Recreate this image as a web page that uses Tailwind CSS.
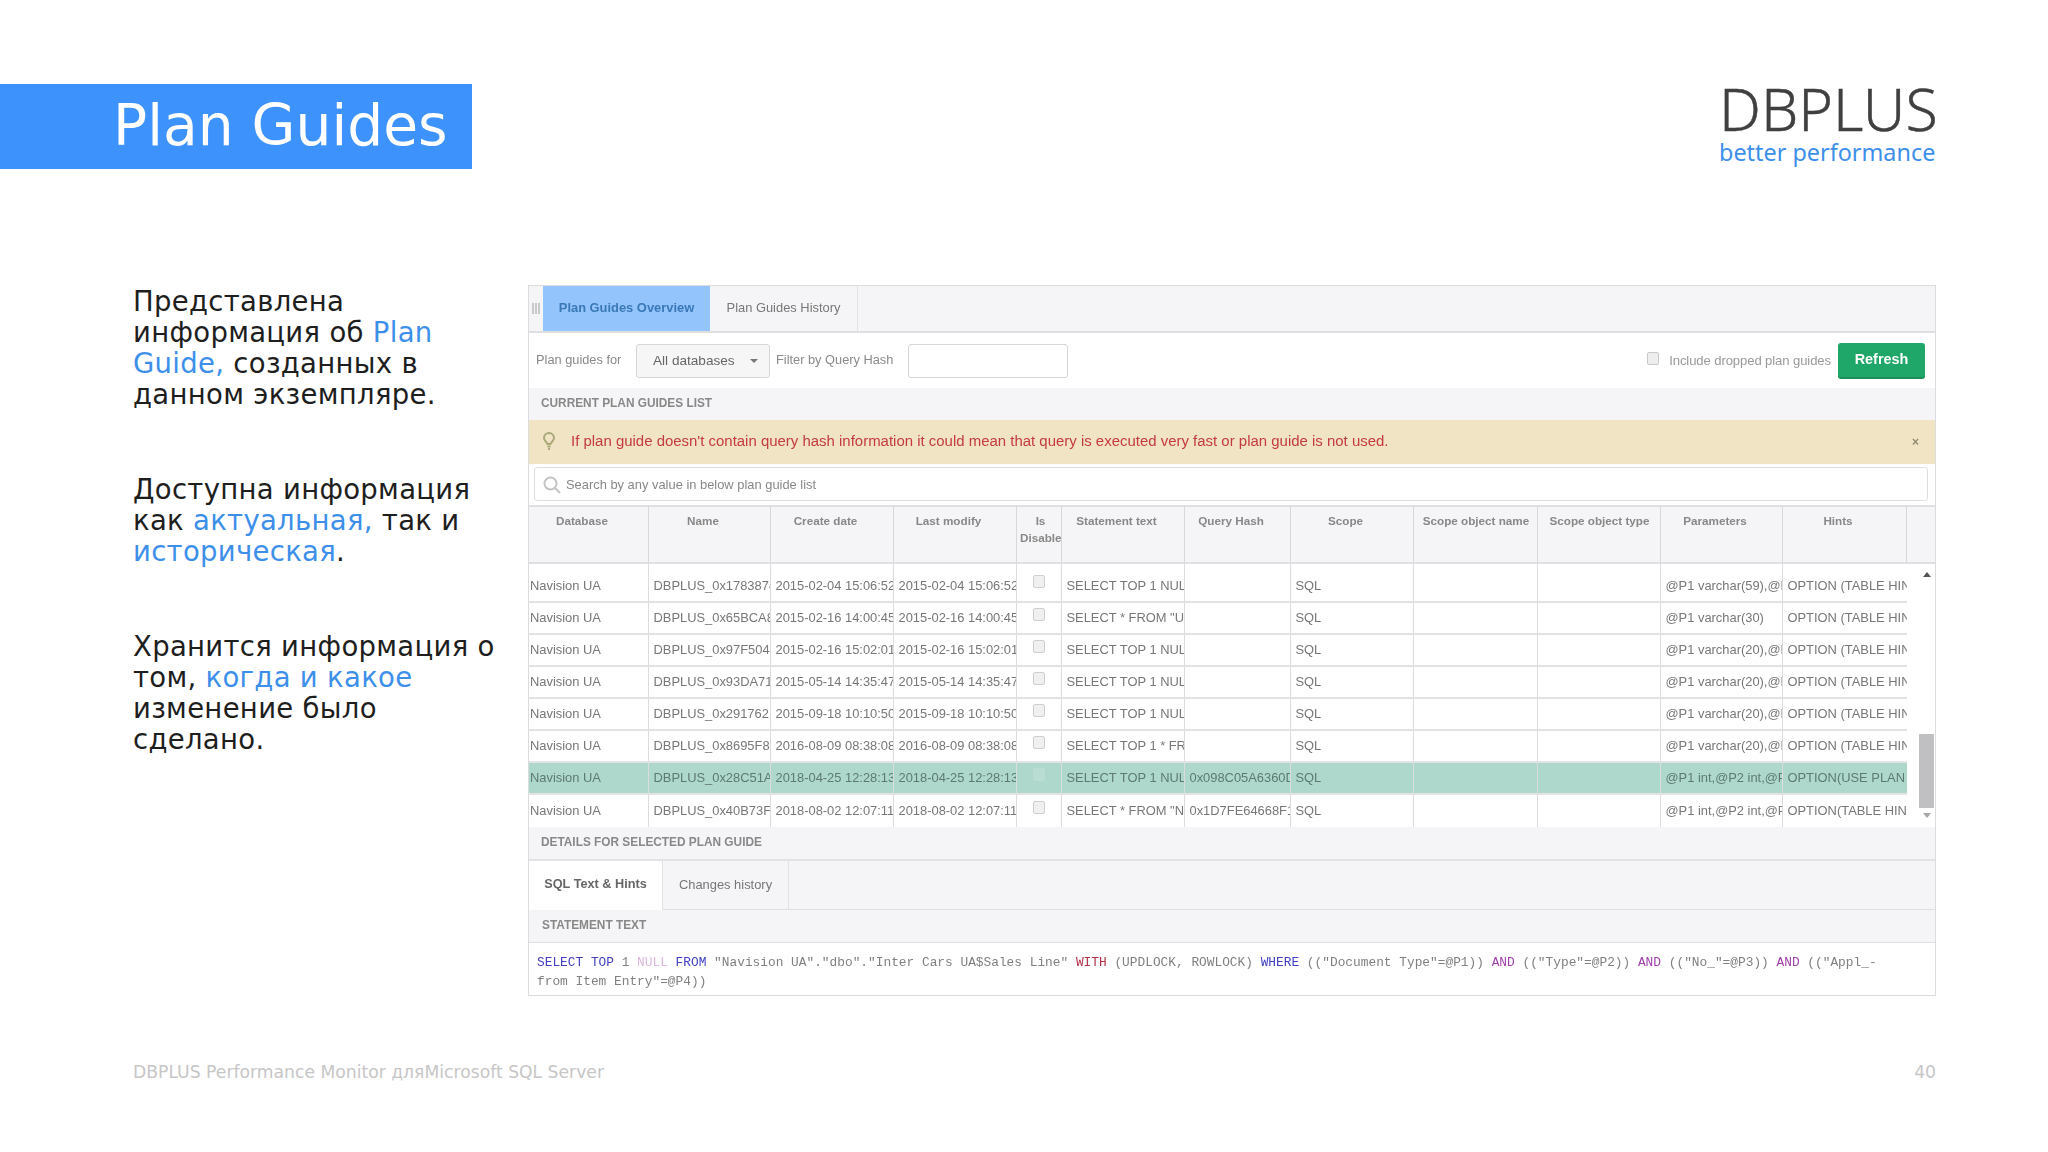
<!doctype html>
<html lang="ru">
<head>
<meta charset="utf-8">
<script src="https://cdn.jsdelivr.net/npm/@tailwindcss/browser@4"></script>
<title>Plan Guides</title>
</head>
<body class="bg-white">
<div class="w-[2048px] h-[1152px] overflow-hidden flex flex-col [font-family:'DejaVu_Sans',sans-serif]">
  <header class="mt-[84px] h-[85px] flex justify-between shrink-0">
    <div class="w-[472px] h-[85px] bg-[#3d93fb] text-white text-[56.7px] leading-[83px] pl-[113px] whitespace-nowrap">Plan Guides</div>
    <div class="w-[219px] mr-[110px] flex flex-col items-stretch [font-family:'Noto_Sans',sans-serif]">
      <div class="text-[#404040] text-[59px] leading-[46px] mt-[1px] font-light [-webkit-text-stroke:0.4px_#404040] whitespace-nowrap">DBPLUS</div>
      <div class="text-[#3d8fea] text-[23.4px] leading-[30px] mt-[6px] whitespace-nowrap">better performance</div>
    </div>
  </header>

  <main class="mt-[116px] flex shrink-0 pl-[133px]">
    <div class="w-[395px] pt-[1px] text-[#1e1e1e] text-[27.5px] leading-[31px] tracking-[0.3px]">
      <p>Представлена информация об <span class="text-[#3d8fea]">Plan Guide,</span> созданных в данном экземпляре.</p>
      <p class="mt-[64px] w-[370px]">Доступна информация как <span class="text-[#3d8fea]">актуальная,</span> так и <span class="text-[#3d8fea]">историческая</span>.</p>
      <p class="mt-[64px] w-[372px]">Хранится информация о том, <span class="text-[#3d8fea]">когда и какое</span> изменение было сделано.</p>
    </div>

    <section class="w-[1408px] h-[711px] border border-[#dcdcdf] flex flex-col text-[#777] [font-family:'Liberation_Sans',sans-serif] text-[12.9px] blur-[0.3px]">
      <div class="h-[47px] shrink-0 flex bg-[#f5f5f7] border-b-2 border-[#dfdfe2]">
        <div class="w-[14px] flex items-center justify-center gap-[1px]">
          <i class="w-[2px] h-[11px] bg-[#c9c9cc]"></i><i class="w-[2px] h-[11px] bg-[#c9c9cc]"></i><i class="w-[2px] h-[11px] bg-[#c9c9cc]"></i>
        </div>
        <div class="w-[167px] bg-[#93c4fb] text-[#3a78b8] font-bold text-[12.9px] pb-[2px] flex items-center justify-center">Plan Guides Overview</div>
        <div class="w-[148px] border-r border-[#e2e2e5] text-[12.9px] pb-[2px] flex items-center justify-center">Plan Guides History</div>
      </div>
      <div class="h-[55px] shrink-0 flex items-center pl-[7px] pr-[10px] text-[12.8px] text-[#8a8a8a]">
        <span class="w-[100px] -mt-[1px]">Plan guides for</span>
        <div class="w-[134px] h-[34px] border border-[#d6d6d8] rounded-[3px] bg-[#f6f6f7] flex items-center justify-between pl-[16px] pr-[11px] pt-[1px] text-[13.6px] text-[#666]">
          <span>All databases</span><i class="w-0 h-0 border-x-[4px] border-x-transparent border-t-[4px] border-t-[#777]"></i>
        </div>
        <span class="ml-[6px] w-[132px] -mt-[1px]">Filter by Query Hash</span>
        <div class="w-[160px] h-[34px] border border-[#d6d6d8] rounded-[3px] bg-white"></div>
        <div class="ml-auto w-[12px] h-[13px] border border-[#c8c8c8] rounded-[2px] bg-[#eeeeee] -mt-[4px]"></div>
        <span class="ml-[10px] text-[13.1px] tracking-[-0.1px] text-[#999] mt-[1px]">Include dropped plan guides</span>
        <div class="ml-[7px] w-[87px] h-[36px] rounded-[3px] bg-[#1fa669] border-b-2 border-[#1b8f5a] text-white font-bold text-[14.4px] flex items-center justify-center">Refresh</div>
      </div>
      <div class="h-[32px] shrink-0 bg-[#f5f5f7] flex items-center pl-[12px] pb-[1px] font-bold text-[11.85px] text-[#888] uppercase">Current plan guides list</div>
      <div class="h-[44px] shrink-0 bg-[#f0e4c4] flex items-center justify-between pl-[12px] pr-[16px] pb-[1px] text-[14.96px] text-[#c53a40]">
        <div class="flex items-center">
          <svg class="w-[16px] h-[20px]" viewBox="0 0 16 20" fill="none" stroke="#a8a878" stroke-width="2"><path d="M8 2a5 5 0 0 0-5 5c0 2.500 2.500 4 3.500 6h3C10.500 11 13 9.500 13 7a5 5 0 0 0-5-5z"/><path d="M6.500 15.500h3M7 18h2"/></svg>
          <span class="ml-[14px]">If plan guide doesn't contain query hash information it could mean that query is executed very fast or plan guide is not used.</span>
        </div>
        <span class="text-[#8f8a70] font-bold text-[12px]">×</span>
      </div>
      <div class="h-[41px] shrink-0 pl-[5px] pr-[7px] pt-[3px]">
        <div class="h-[34px] border border-[#dedee0] rounded-[3px] flex items-center pl-[8px] pt-[1px] text-[12.9px] text-[#888]">
          <svg class="w-[18px] h-[18px]" viewBox="0 0 18 18" fill="none" stroke="#c4c4c6" stroke-width="2"><circle cx="7.500" cy="7.500" r="6"/><path d="M12 12l5 5"/></svg>
          <span class="ml-[5px]">Search by any value in below plan guide list</span>
        </div>
      </div>

      <table class="w-[1406px] table-fixed border-separate border-spacing-0 shrink-0 [&_th]:border-r [&_th]:border-[#d8d8db] [&_th]:bg-[#f5f5f7] [&_th]:h-[59px] [&_th]:align-top [&_th]:pt-[5px] [&_th]:pr-[13px] [&_th]:font-bold [&_th]:text-[11.7px] [&_th]:leading-[17px] [&_th]:text-[#888] [&_th]:border-y-2 [&_th]:border-y-[#e0e0e3] [&_th]:overflow-hidden [&_th]:whitespace-nowrap">
        <colgroup>
          <col class="w-[120px]"><col class="w-[122px]"><col class="w-[123px]"><col class="w-[123px]"><col class="w-[45px]"><col class="w-[123px]"><col class="w-[106px]"><col class="w-[123px]"><col class="w-[124px]"><col class="w-[123px]"><col class="w-[122px]"><col class="w-[124px]"><col>
        </colgroup>
        <tr>
          <th>Database</th><th>Name</th><th>Create date</th><th>Last modify</th><th class="!pr-0 !pl-[3px]">Is<br>Disabled</th><th>Statement text</th><th>Query Hash</th><th>Scope</th><th class="!pr-0 !pl-[1px]">Scope object name</th><th class="!pr-0 !pl-[1px]">Scope object type</th><th>Parameters</th><th>Hints</th><th class="!border-r-0"></th>
        </tr>
      </table>

      <div class="h-[263px] shrink-0 flex">
        <table class="w-[1378px] h-[263px] shrink-0 table-fixed border-separate border-spacing-0 [&_td]:border-r [&_td]:border-[#dcdcdf] [&_td]:border-b-2 [&_td]:border-b-[#e3e3e6] [&_td]:h-[32px] [&_td]:pl-[4.5px] [&_td]:overflow-hidden [&_td]:whitespace-nowrap [&_td:first-child]:pl-[1px] [&_td:nth-child(5)]:pr-[5px] [&_tr:last-child_td]:border-b-0 [&_td:last-child]:border-r-0">
          <colgroup>
            <col class="w-[120px]"><col class="w-[122px]"><col class="w-[123px]"><col class="w-[123px]"><col class="w-[45px]"><col class="w-[123px]"><col class="w-[106px]"><col class="w-[123px]"><col class="w-[124px]"><col class="w-[123px]"><col class="w-[122px]"><col class="w-[124px]">
          </colgroup>
          <tr class="[&_td]:h-[39px] [&_td]:pt-[7px]">
            <td>Navision UA</td><td>DBPLUS_0x1783874F</td><td>2015-02-04 15:06:52</td><td>2015-02-04 15:06:52</td><td class="!pt-0"><div class="w-[12px] h-[13px] mx-auto -mt-[3px] border border-[#cfcfcf] rounded-[2px] bg-[#f0f0f0]"></div></td><td>SELECT TOP 1 NULL FROM</td><td></td><td>SQL</td><td></td><td></td><td>@P1 varchar(59),@P2</td><td>OPTION (TABLE HINT</td>
          </tr>
          <tr>
            <td>Navision UA</td><td>DBPLUS_0x65BCA8F1</td><td>2015-02-16 14:00:45</td><td>2015-02-16 14:00:45</td><td><div class="w-[12px] h-[13px] mx-auto -mt-[7px] border border-[#cfcfcf] rounded-[2px] bg-[#f0f0f0]"></div></td><td>SELECT * FROM "UA</td><td></td><td>SQL</td><td></td><td></td><td>@P1 varchar(30)</td><td>OPTION (TABLE HINT</td>
          </tr>
          <tr>
            <td>Navision UA</td><td>DBPLUS_0x97F50401</td><td>2015-02-16 15:02:01</td><td>2015-02-16 15:02:01</td><td><div class="w-[12px] h-[13px] mx-auto -mt-[7px] border border-[#cfcfcf] rounded-[2px] bg-[#f0f0f0]"></div></td><td>SELECT TOP 1 NULL FROM</td><td></td><td>SQL</td><td></td><td></td><td>@P1 varchar(20),@P2</td><td>OPTION (TABLE HINT</td>
          </tr>
          <tr>
            <td>Navision UA</td><td>DBPLUS_0x93DA71C2</td><td>2015-05-14 14:35:47</td><td>2015-05-14 14:35:47</td><td><div class="w-[12px] h-[13px] mx-auto -mt-[7px] border border-[#cfcfcf] rounded-[2px] bg-[#f0f0f0]"></div></td><td>SELECT TOP 1 NULL FROM</td><td></td><td>SQL</td><td></td><td></td><td>@P1 varchar(20),@P2</td><td>OPTION (TABLE HINT</td>
          </tr>
          <tr>
            <td>Navision UA</td><td>DBPLUS_0x291762B3</td><td>2015-09-18 10:10:50</td><td>2015-09-18 10:10:50</td><td><div class="w-[12px] h-[13px] mx-auto -mt-[7px] border border-[#cfcfcf] rounded-[2px] bg-[#f0f0f0]"></div></td><td>SELECT TOP 1 NULL FROM</td><td></td><td>SQL</td><td></td><td></td><td>@P1 varchar(20),@P2</td><td>OPTION (TABLE HINT</td>
          </tr>
          <tr>
            <td>Navision UA</td><td>DBPLUS_0x8695F8B1</td><td>2016-08-09 08:38:08</td><td>2016-08-09 08:38:08</td><td><div class="w-[12px] h-[13px] mx-auto -mt-[7px] border border-[#cfcfcf] rounded-[2px] bg-[#f0f0f0]"></div></td><td>SELECT TOP 1 * FROM</td><td></td><td>SQL</td><td></td><td></td><td>@P1 varchar(20),@P2</td><td>OPTION (TABLE HINT</td>
          </tr>
          <tr class="[&_td]:bg-[#aed8cb] [&_td]:border-[#aed8cb] [&_td]:border-b-[#a9d2c5] [&_td]:text-[#5d7a72]">
            <td>Navision UA</td><td>DBPLUS_0x28C51A07</td><td>2018-04-25 12:28:13</td><td>2018-04-25 12:28:13</td><td><div class="w-[12px] h-[13px] mx-auto -mt-[7px] border border-[#bcdcd2] rounded-[2px] bg-[#b9ddd2]"></div></td><td>SELECT TOP 1 NULL FROM</td><td>0x098C05A6360D11</td><td>SQL</td><td></td><td></td><td>@P1 int,@P2 int,@P3</td><td>OPTION(USE PLAN N'</td>
          </tr>
          <tr>
            <td>Navision UA</td><td>DBPLUS_0x40B73F52</td><td>2018-08-02 12:07:11</td><td>2018-08-02 12:07:11</td><td><div class="w-[12px] h-[13px] mx-auto -mt-[7px] border border-[#cfcfcf] rounded-[2px] bg-[#f0f0f0]"></div></td><td>SELECT * FROM "Nav</td><td>0x1D7FE64668F1A2</td><td>SQL</td><td></td><td></td><td>@P1 int,@P2 int,@P3</td><td>OPTION(TABLE HINT</td>
          </tr>
        </table>
        <div class="ml-[12px] w-[15px] flex flex-col items-center">
          <i class="mt-[8px] w-0 h-0 border-x-[4px] border-x-transparent border-b-[5px] border-b-[#555]"></i>
          <div class="mt-[157px] w-[15px] h-[74px] bg-[#c0c0c2]"></div>
          <i class="mt-[5px] w-0 h-0 border-x-[4px] border-x-transparent border-t-[5px] border-t-[#a8a8a8]"></i>
        </div>
      </div>

      <div class="h-[34px] shrink-0 bg-[#f5f5f7] border-b-2 border-[#e2e2e5] flex items-center pl-[12px] font-bold text-[11.85px] text-[#888] uppercase">Details for selected plan guide</div>
      <div class="h-[49px] shrink-0 flex bg-[#f5f5f7] border-b border-[#dfdfe2]">
        <div class="w-[133px] -mb-px bg-white flex items-center justify-center pb-[1px] font-bold text-[12.7px] text-[#666]">SQL Text &amp; Hints</div>
        <div class="w-[127px] border-x border-[#e2e2e5] flex items-center justify-center text-[12.9px]">Changes history</div>
      </div>
      <div class="h-[33px] shrink-0 bg-[#f5f5f7] border-b border-[#dfdfe2] flex items-center pl-[13px] font-bold text-[11.85px] text-[#888] uppercase">Statement text</div>
      <div class="flex-1 pl-[8px] pt-[10px] [font-family:'Liberation_Mono',monospace] text-[12.83px] leading-[19px] whitespace-nowrap text-[#808080]">
        <span class="text-[#4040c0]">SELECT TOP</span> 1 <span class="text-[#dfb8df]">NULL</span> <span class="text-[#4040c0]">FROM</span> "Navision UA"."dbo"."Inter Cars UA$Sales Line" <span class="text-[#b03045]">WITH</span> (UPDLOCK, ROWLOCK) <span class="text-[#4040c0]">WHERE</span> (("Document Type"=@P1)) <span class="text-[#a040a8]">AND</span> (("Type"=@P2)) <span class="text-[#a040a8]">AND</span> (("No_"=@P3)) <span class="text-[#a040a8]">AND</span> (("Appl_-<br>from Item Entry"=@P4))
      </div>
    </section>
  </main>

  <footer class="mt-[65px] ml-[133px] mr-[112px] flex justify-between text-[#c6c6c6] text-[17.2px] leading-[22px] shrink-0">
    <span>DBPLUS Performance Monitor дляMicrosoft SQL Server</span>
    <span>40</span>
  </footer>
</div>
</body>
</html>
